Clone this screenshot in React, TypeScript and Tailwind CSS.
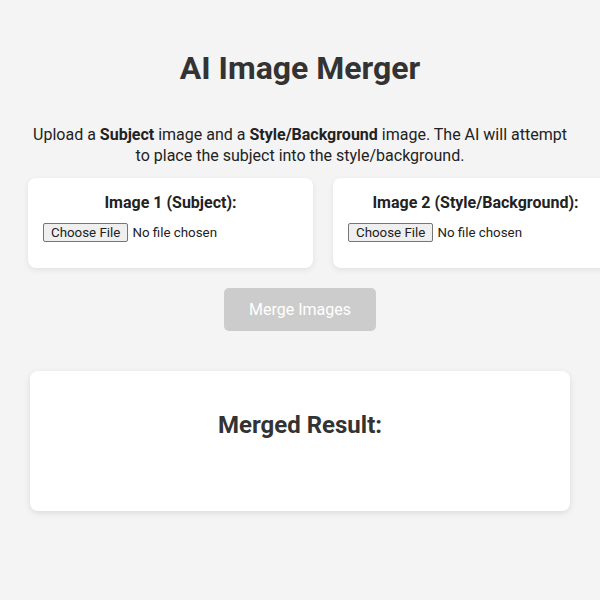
const UploadCard = ({ label }: { label: string }) => {
  return (
    <div className="w-[285px] shrink-0 rounded-lg bg-white px-[15px] pt-[15px] pb-[25px] shadow-[0_2px_6px_rgba(0,0,0,0.08)]">
      <h3 className="mb-[10px] text-center text-base leading-[20px] font-bold text-[#222]">
        {label}
      </h3>
      <input
        type="file"
        accept="image/*"
        className="block h-[20px] text-[13.33px] leading-[19px] text-[#222] file:mr-[4px] file:h-[19px] file:rounded-[2px] file:border file:border-solid file:border-[#767676] file:bg-[#efefef] file:px-[7px] file:py-0 file:text-[13.33px] file:leading-[17px] file:text-[#222]"
      />
    </div>
  );
};

const App = () => {
  return (
    <div className="min-h-[600px] overflow-hidden bg-[#f4f4f4] font-['Roboto','Liberation_Sans',sans-serif]">
      <div className="mx-auto w-[540px] pt-[49px]">
        <h1 className="text-center text-[32px] leading-[38px] font-bold text-[#333]">
          AI Image Merger
        </h1>

        <p className="mt-[37px] text-center text-base leading-[21px] text-[#222]">
          Upload a <strong>Subject</strong> image and a{" "}
          <strong>Style/Background</strong> image. The AI will attempt to place
          the subject into the style/background.
        </p>

        <div className="mt-[12px] ml-[-2px] flex flex-row gap-5">
          <UploadCard label="Image 1 (Subject):" />
          <UploadCard label="Image 2 (Style/Background):" />
        </div>

        <div className="mt-5 flex justify-center">
          <button
            disabled
            className="rounded-[5px] bg-[#ccc] px-[25px] py-[12px] text-base leading-[19px] text-white"
          >
            Merge Images
          </button>
        </div>

        <div className="mt-10 h-[140px] rounded-lg bg-white p-5 shadow-[0_2px_6px_rgba(0,0,0,0.1)]">
          <h2 className="mt-5 text-center text-2xl leading-[28px] font-bold text-[#333]">
            Merged Result:
          </h2>
        </div>
      </div>
    </div>
  );
};

export default App;
